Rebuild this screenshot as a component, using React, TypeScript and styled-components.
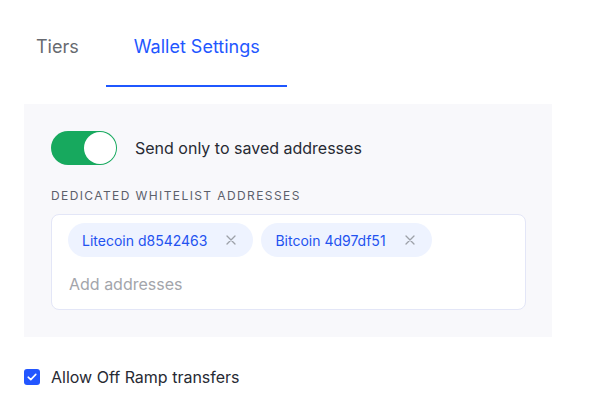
import * as React from "react";
import styled, { createGlobalStyle } from "styled-components";

const blue = "#1f57ff";
const textColor = "#272a33";

const GlobalStyle = createGlobalStyle`
  html, body {
    margin: 0;
    padding: 0;
    background: #ffffff;
  }
  body {
    font-family: Inter, "Liberation Sans", Arial, sans-serif;
    color: ${textColor};
    -webkit-font-smoothing: antialiased;
  }
`;

const Page = styled.div`
  width: 592px;
  height: 420px;
  box-sizing: border-box;
  padding: 0 0 0 24px;
`;

const TabBar = styled.div`
  display: flex;
  margin-left: -16px;
  height: 87px;
`;

const Tab = styled.div<{ $active?: boolean }>`
  display: flex;
  align-items: center;
  padding: 8px 27px 0 28px;
  box-sizing: border-box;
  font-size: 18px;
  color: ${(p) => (p.$active ? blue : "#676a70")};
  border-bottom: 2px solid ${(p) => (p.$active ? blue : "transparent")};
`;

const Panel = styled.div`
  margin-top: 17px;
  width: 528px;
  box-sizing: border-box;
  background: #f8f8fb;
  padding: 27px 26px 27px 27px;
`;

const ToggleRow = styled.div`
  display: flex;
  align-items: center;
  gap: 18px;
`;

const Switch = styled.div<{ $on?: boolean }>`
  width: 66px;
  height: 34px;
  border-radius: 17px;
  box-sizing: border-box;
  padding: 1px;
  background: ${(p) => (p.$on ? "#17a95e" : "#d0d3da")};
  display: flex;
  justify-content: ${(p) => (p.$on ? "flex-end" : "flex-start")};
  align-items: center;
`;

const Knob = styled.div`
  width: 32px;
  height: 32px;
  border-radius: 50%;
  background: #ffffff;
`;

const BodyText = styled.span`
  font-size: 16px;
  color: ${textColor};
`;

const SectionLabel = styled.div`
  margin-top: 23px;
  font-size: 12px;
  line-height: 16px;
  letter-spacing: 1.4px;
  text-transform: uppercase;
  color: #5c606b;
`;

const AddressBox = styled.div`
  margin-top: 10px;
  height: 96px;
  box-sizing: border-box;
  background: #ffffff;
  border: 1px solid #e3e6f7;
  border-radius: 8px;
  padding: 8px 16px 0;
`;

const ChipRow = styled.div`
  display: flex;
  gap: 8px;
`;

const Chip = styled.div`
  display: flex;
  align-items: center;
  height: 34px;
  border-radius: 17px;
  background: #eef3ff;
  padding: 0 17px 0 14px;
  font-size: 14px;
  color: #2352f0;
`;

const ChipClose = styled.svg`
  margin-left: 19px;
  width: 10px;
  height: 10px;
`;

const AddInput = styled.div`
  margin-top: 15px;
  padding-left: 1px;
  font-size: 16px;
  line-height: 24px;
  color: #a3a5ab;
`;

const CheckRow = styled.div`
  margin-top: 30px;
  display: flex;
  align-items: center;
  gap: 11px;
`;

const CheckBox = styled.div`
  width: 16px;
  height: 16px;
  border-radius: 3px;
  background: #2356ff;
  display: flex;
  align-items: center;
  justify-content: center;
`;

const Close = () => (
  <ChipClose viewBox="0 0 10 10">
    <path d="M1 1 L9 9 M9 1 L1 9" stroke="#9da1a8" strokeWidth="1.3" strokeLinecap="round" />
  </ChipClose>
);

export default function App() {
  const chips = ["Litecoin d8542463", "Bitcoin 4d97df51"];
  return (
    <Page>
      <GlobalStyle />
      <TabBar>
        <Tab>Tiers</Tab>
        <Tab $active>Wallet Settings</Tab>
      </TabBar>
      <Panel>
        <ToggleRow>
          <Switch $on>
            <Knob />
          </Switch>
          <BodyText>Send only to saved addresses</BodyText>
        </ToggleRow>
        <SectionLabel>Dedicated whitelist addresses</SectionLabel>
        <AddressBox>
          <ChipRow>
            {chips.map((c) => (
              <Chip key={c}>
                {c}
                <Close />
              </Chip>
            ))}
          </ChipRow>
          <AddInput>Add addresses</AddInput>
        </AddressBox>
      </Panel>
      <CheckRow>
        <CheckBox>
          <svg width="10" height="8" viewBox="0 0 10 8">
            <path d="M1.2 4.2 L3.8 6.6 L8.8 1.4" fill="none" stroke="#fff" strokeWidth="1.6" strokeLinecap="round" strokeLinejoin="round" />
          </svg>
        </CheckBox>
        <BodyText>Allow Off Ramp transfers</BodyText>
      </CheckRow>
    </Page>
  );
}
